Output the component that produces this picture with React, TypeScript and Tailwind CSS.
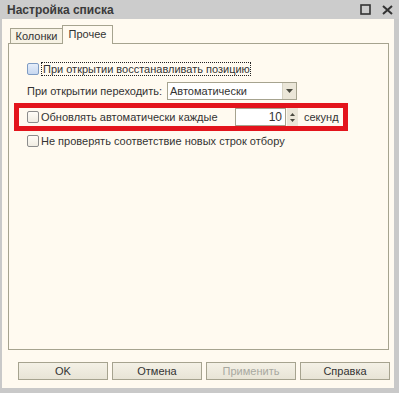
import React from 'react';

function CheckBox({ focused }: { focused?: boolean }) {
    return (
        <div
            className={
                'w-[12px] h-[12px] shrink-0 rounded-[2px] border ' +
                (focused
                    ? 'border-[#7f9cc4] bg-gradient-to-b from-[#e6eefa] to-[#c8d8f0]'
                    : 'border-[#8c8c8c] bg-gradient-to-b from-[#fffdf8] to-[#f0ece2]')
            }
        />
    );
}

function Button({ label, disabled }: { label: string; disabled?: boolean }) {
    return (
        <div
            className={
                'w-[90px] h-[18px] flex items-center justify-center border border-[#a6a38f] bg-gradient-to-b from-[#f4f1e6] to-[#e8e4d6] ' +
                (disabled ? 'text-[#a8a8a0]' : 'text-[#333]')
            }
        >
            {label}
        </div>
    );
}

export default function App() {
    return (
        <div className="w-[399px] h-[393px] flex flex-col bg-[#c9c9c9] text-[11px] text-[#333] whitespace-nowrap font-['Liberation_Sans',Arial,sans-serif] overflow-hidden">
            {/* title bar */}
            <div className="h-[19px] shrink-0 flex items-center bg-[#cccccc] pl-[7px] pr-[6px]">
                <span className="font-bold text-[12px] text-[#3a3a3a] leading-none">Настройка списка</span>
                <div className="ml-auto flex items-center gap-[11px]">
                    <svg width="11" height="11" viewBox="0 0 11 11">
                        <rect x="1" y="1" width="9" height="9" fill="none" stroke="#333" strokeWidth="1.6" />
                    </svg>
                    <svg width="11" height="10" viewBox="0 0 11 10">
                        <path d="M1 1 L10 9 M10 1 L1 9" stroke="#333" strokeWidth="2" />
                    </svg>
                </div>
            </div>

            <div className="flex-1 flex pl-[2px] pr-[5px] pb-[5px]">
                <div className="flex-1 flex flex-col bg-[#fffaf0]">
                    {/* tabs */}
                    <div className="h-[24px] shrink-0 flex items-end pl-[8px] relative z-10">
                        <div className="h-[16px] w-[53px] flex items-center justify-center border border-[#a6a38f] bg-[#f7f2e4] mb-[-1px] pt-[1px]">
                            Колонки
                        </div>
                        <div className="h-[19px] w-[51px] flex items-center justify-center border border-b-0 border-[#a6a38f] bg-[#fffaf0] mb-[-1px] -ml-px pb-[1px]">
                            Прочее
                        </div>
                    </div>

                    {/* panel */}
                    <div className="ml-[6px] mr-[5px] h-[307px] shrink-0 border border-[#a6a38f] flex flex-col pl-[18px]">
                        <div className="mt-[18px] h-[14px] flex items-center gap-[2px]">
                            <CheckBox focused />
                            <span className="h-[14px] w-[210px] flex items-center border border-dotted border-[#222] pl-px leading-none">
                                При открытии восстанавливать позицию
                            </span>
                        </div>

                        <div className="mt-[6px] h-[18px] flex items-center">
                            <span className="w-[140px]">При открытии переходить:</span>
                            <div className="w-[130px] h-[18px] flex border border-[#a6a38f] bg-white">
                                <span className="flex-1 pl-[2px] flex items-center">Автоматически</span>
                                <div className="w-[14px] flex items-center justify-center bg-[#ebe6d8] border-l border-[#d6d2c2]">
                                    <svg width="7" height="4" viewBox="0 0 7 4">
                                        <path d="M0 0 L7 0 L3.5 4 Z" fill="#4a4a40" />
                                    </svg>
                                </div>
                            </div>
                        </div>

                        <div className="mt-[8px] h-[18px] flex items-center relative">
                            <CheckBox />
                            <span className="ml-[2px] w-[194px]">Обновлять автоматически каждые</span>
                            <div className="w-[51px] h-[18px] border border-[#a6a38f] bg-white flex items-center justify-end pr-[3px] text-[12px]">10</div>
                            <div className="ml-px w-[11px] h-[18px] flex flex-col items-center justify-center gap-[3px] bg-[#ebe6d8]">
                                <svg width="5" height="3" viewBox="0 0 5 3">
                                    <path d="M0 3 L5 3 L2.5 0 Z" fill="#4a4a40" />
                                </svg>
                                <svg width="5" height="3" viewBox="0 0 5 3">
                                    <path d="M0 0 L5 0 L2.5 3 Z" fill="#4a4a40" />
                                </svg>
                            </div>
                            <span className="ml-[6px]">секунд</span>
                            <div className="absolute left-[-13px] top-[-5px] w-[334px] h-[28px] border-[5px] border-[#e3141c] pointer-events-none" />
                        </div>

                        <div className="mt-[8px] h-[14px] flex items-center gap-[2px]">
                            <CheckBox />
                            <span>Не проверять соответствие новых строк отбору</span>
                        </div>
                    </div>

                    {/* buttons */}
                    <div className="mt-[12px] pl-[16px] flex gap-[4px]">
                        <Button label="OK" />
                        <Button label="Отмена" />
                        <Button label="Применить" disabled />
                        <Button label="Справка" />
                    </div>
                </div>
            </div>
        </div>
    );
}
